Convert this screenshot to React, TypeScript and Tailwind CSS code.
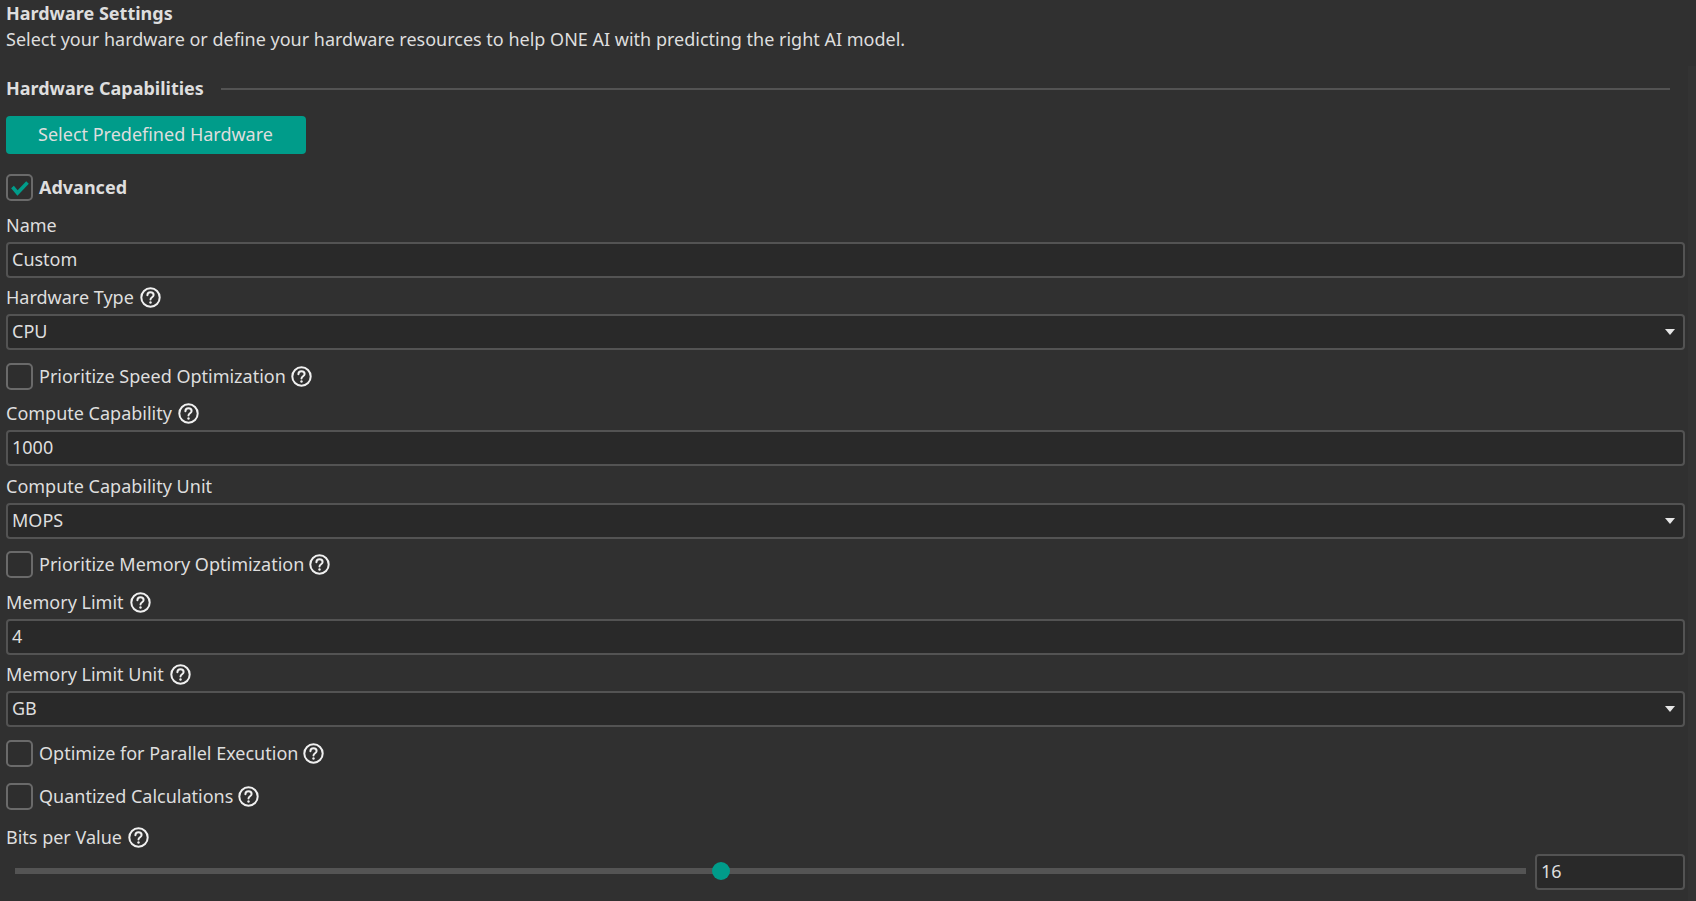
import React from "react";

const font = { fontFamily: '"Noto Sans", sans-serif' };

function Help() {
  return (
    <svg width="21" height="21" viewBox="0 0 21 21" fill="none" className="shrink-0">
      <circle cx="10.5" cy="10.5" r="9.2" stroke="#f0f0f0" strokeWidth="2" />
      <path d="M7.4 8.2c0-1.8 1.4-2.9 3.1-2.9s3.1 1.1 3.1 2.7c0 2.2-3.1 2.2-3.1 4.5" stroke="#f0f0f0" strokeWidth="2" strokeLinecap="round" />
      <circle cx="10.5" cy="15.5" r="1.2" fill="#f0f0f0" />
    </svg>
  );
}

function Label({ text, help, className }: { text: string; help?: boolean; className: string }) {
  return (
    <div className={`flex items-center gap-[6px] h-[27px] text-[18px] leading-[27px] ${className}`}>
      <span>{text}</span>
      {help && <Help />}
    </div>
  );
}

function Field({ value, select, className = "" }: { value: string; select?: boolean; className?: string }) {
  return (
    <div className={`relative h-[36px] rounded-[4px] border-2 border-[#535353] bg-[#292929] pl-[4px] text-[18px] leading-[31px] ${className}`}>
      {value}
      {select && (
        <div className="absolute right-[8px] top-[13px] w-0 h-0 border-l-[5px] border-r-[5px] border-t-[6px] border-l-transparent border-r-transparent border-t-[#e6e6e6]" />
      )}
    </div>
  );
}

function Check({ text, help, checked, bold, className }: { text: string; help?: boolean; checked?: boolean; bold?: boolean; className: string }) {
  return (
    <div className={`flex items-center h-[27px] text-[18px] ${className}`}>
      <div className="w-[27px] h-[27px] rounded-[5px] border-2 border-[#6a6a6a] bg-[#2e2e2e] flex items-center justify-center shrink-0">
        {checked && (
          <svg width="19" height="16" viewBox="0 0 19 16" fill="none">
            <path d="M2.5 7L7.5 13L17.5 2.5" stroke="#009c8a" strokeWidth="3.6" />
          </svg>
        )}
      </div>
      <span className={`ml-[6px] ${bold ? "font-bold" : ""}`}>{text}</span>
      {help && <span className="ml-[5px] flex"><Help /></span>}
    </div>
  );
}

export default function App() {
  return (
    <div style={font} className="relative h-[901px] overflow-hidden bg-[#303030] text-[#dedede] pl-[6px] pr-[11px] flex flex-col">
      <div className="font-bold text-[18px] leading-[27px]">Hardware Settings</div>
      <div className="text-[18px] leading-[27px] -mt-[1px]">
        Select your hardware or define your hardware resources to help ONE AI with predicting the right AI model.
      </div>
      <div className="flex items-center mt-[22px] h-[28px] pr-[15px]">
        <span className="font-bold text-[18px] mb-[2px]">Hardware Capabilities</span>
        <div className="flex-1 h-[2px] bg-[#535353] ml-[17px]" />
      </div>
      <div className="mt-[13px] w-[300px] h-[38px] rounded-[4px] bg-[#009c8a] text-center text-[18px] leading-[37px] pr-[1px]">
        Select Predefined Hardware
      </div>
      <Check className="mt-[20px]" text="Advanced" checked bold />
      <Label className="mt-[11px]" text="Name" />
      <Field className="mt-[3px]" value="Custom" />
      <Label className="mt-[6px]" text="Hardware Type" help />
      <Field className="mt-[3px]" value="CPU" select />
      <Check className="mt-[13px]" text="Prioritize Speed Optimization" help />
      <Label className="mt-[10px]" text="Compute Capability" help />
      <Field className="mt-[3px]" value="1000" />
      <Label className="mt-[7px]" text="Compute Capability Unit" />
      <Field className="mt-[3px]" value="MOPS" select />
      <Check className="mt-[12px]" text="Prioritize Memory Optimization" help />
      <Label className="mt-[11px]" text="Memory Limit" help />
      <Field className="mt-[3px]" value="4" />
      <Label className="mt-[6px]" text="Memory Limit Unit" help />
      <Field className="mt-[3px]" value="GB" select />
      <Check className="mt-[13px]" text="Optimize for Parallel Execution" help />
      <Check className="mt-[16px]" text="Quantized Calculations" help />
      <Label className="mt-[14px]" text="Bits per Value" help />
      <div className="flex items-start mt-[3px]">
        <div className="relative flex-1 h-[6px] mt-[14px] bg-[#545454] ml-[9px] mr-[9px]">
          <div className="absolute left-[697px] top-[-6px] w-[18px] h-[18px] rounded-full bg-[#009c8a]" />
        </div>
        <Field className="w-[150px] shrink-0" value="16" />
      </div>
      <div className="absolute right-0 top-[66px] bottom-0 w-[8px] bg-[#333333]" />
    </div>
  );
}
